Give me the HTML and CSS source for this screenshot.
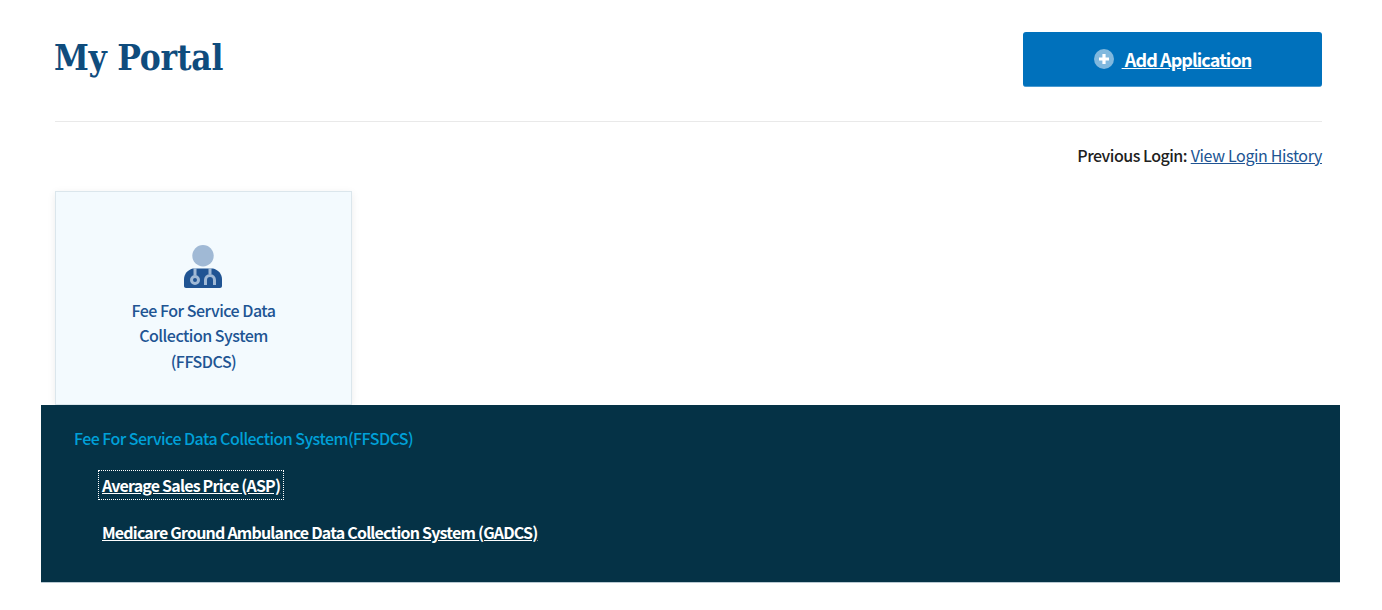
FILE: index.html
```html
<!DOCTYPE html>
<html lang="en">
<head>
<meta charset="utf-8">
<title>My Portal</title>
<link rel="stylesheet" href="styles.css">
</head>
<body>
<main class="page">
  <header class="head">
    <h1 class="title">My Portal</h1>
    <a class="add-btn" href="#">
      <svg class="add-icon" viewBox="0 0 20 20" aria-hidden="true">
        <circle cx="10" cy="10" r="10" fill="#fff" fill-opacity=".5"/>
        <path d="M10 5v10M5 10h10" stroke="#fff" stroke-width="3.200" fill="none"/>
      </svg>
      <span class="add-text">&nbsp;Add Application</span>
    </a>
  </header>
  <p class="history"><strong class="history-label">Previous Login:</strong> <a class="history-link" href="#">View Login History</a></p>
  <a class="card" href="#">
    <svg class="doc-icon" viewBox="0 0 38 43" aria-hidden="true">
      <circle cx="19" cy="10.700" r="10.700" fill="#a0b9d5"/>
      <path d="M9 23.500h20c5 1.200 9 5.500 9 10.500v7c0 1.200-.9 2-2 2H2c-1.100 0-2-.8-2-2v-7c0-5 4-9.300 9-10.500z" fill="#205493"/>
      <g fill="none" stroke="#a0b9d5" stroke-width="3">
        <path d="M11 23v7"/>
        <circle cx="11" cy="35" r="3.500"/>
        <path d="M26 23v6"/>
        <path d="M21.500 40v-5a4.500 4.500 0 0 1 9 0v5"/>
      </g>
    </svg>
    <span class="card-label">Fee For Service Data<br>Collection System<br>(FFSDCS)</span>
  </a>
  <section class="panel">
    <h2 class="panel-title">Fee For Service Data Collection System(FFSDCS)</h2>
    <ul class="panel-list">
      <li class="panel-item"><a class="panel-link is-focus" href="#">Average Sales Price (ASP)</a></li>
      <li class="panel-item"><a class="panel-link" href="#">Medicare Ground Ambulance Data Collection System (GADCS)</a></li>
    </ul>
  </section>
</main>
</body>
</html>
```

FILE: styles.css
```css
* { box-sizing: border-box; }
html, body { margin: 0; background: #fff; }
body {
  font-family: "Noto Sans CJK SC", "Source Sans Pro", "Noto Sans", sans-serif;
  color: #212121;
  height: 610px;
  overflow: hidden;
}
.page { padding: 32px 60px 0 41px; width: 1382px; }
.head {
  display: flex;
  justify-content: space-between;
  align-items: flex-start;
  margin-left: 14px;
  height: 90px;
  border-bottom: 1px solid #e9e9e9;
}
.title {
  margin: 0 0 0 -1px;
  font-family: "DejaVu Serif Condensed", "DejaVu Serif", serif;
  font-stretch: condensed;
  font-weight: 700;
  font-size: 35px;
  line-height: 52px;
  letter-spacing: -.25px;
  color: #0f4c7d;
}
.add-btn {
  width: 299px;
  height: 55px;
  background: #0071bc;
  border-radius: 3px;
  border-bottom: 1px solid #4a9ad0;
  color: #fff;
  display: flex;
  align-items: center;
  justify-content: center;
  gap: 8px;
  padding-bottom: 1px;
  font-size: 18px;
  font-weight: 700;
  text-decoration: underline;
}
.add-icon { width: 20px; height: 20px; display: block; }
.add-text { line-height: 24px; letter-spacing: -.9px; }
.history {
  margin: 21px 0 0;
  height: 48px;
  text-align: right;
  font-size: 16px;
  line-height: 24px;
}
.history-label { font-weight: 500; letter-spacing: -.5px; }
.history-link { color: #205493; text-decoration: underline; letter-spacing: -.35px; }
.card {
  margin-left: 14px;
  width: 297px;
  height: 214px;
  display: flex;
  flex-direction: column;
  align-items: center;
  padding-top: 53px;
  background: #f3fafe;
  border: 1px solid #dbe6ec;
  box-shadow: 0 2px 8px rgba(0, 0, 0, .08);
  text-decoration: none;
  color: #205493;
}
.doc-icon { width: 38px; height: 43px; display: block; flex: none; margin-right: 1px; }
.card-label {
  margin-top: 9.500px;
  text-align: center;
  font-size: 16px;
  font-weight: 500;
  line-height: 25.500px;
  letter-spacing: -.5px;
}
.panel {
  position: relative;
  height: 178px;
  width: 1299px;
  background: #053246;
  padding: 20px 33px 0;
  border-bottom: 1px solid #b9c9d2;
}
.panel-title {
  margin: 0;
  font-size: 16px;
  line-height: 26px;
  font-weight: 500;
  color: #00a0d8;
  letter-spacing: -.55px;
}
.panel-list { list-style: none; margin: 21px 0 0; padding: 0 0 0 27px; display: flex; flex-direction: column; gap: 21px; }
.panel-item { height: 26px; }
.panel-link {
  color: #fff;
  font-size: 16px;
  font-weight: 700;
  line-height: 26px;
  text-decoration: underline;
  letter-spacing: -.8px;
  padding: 0 1px;
}
.is-focus { outline: 1px dotted #fff; outline-offset: 2px; }
```
